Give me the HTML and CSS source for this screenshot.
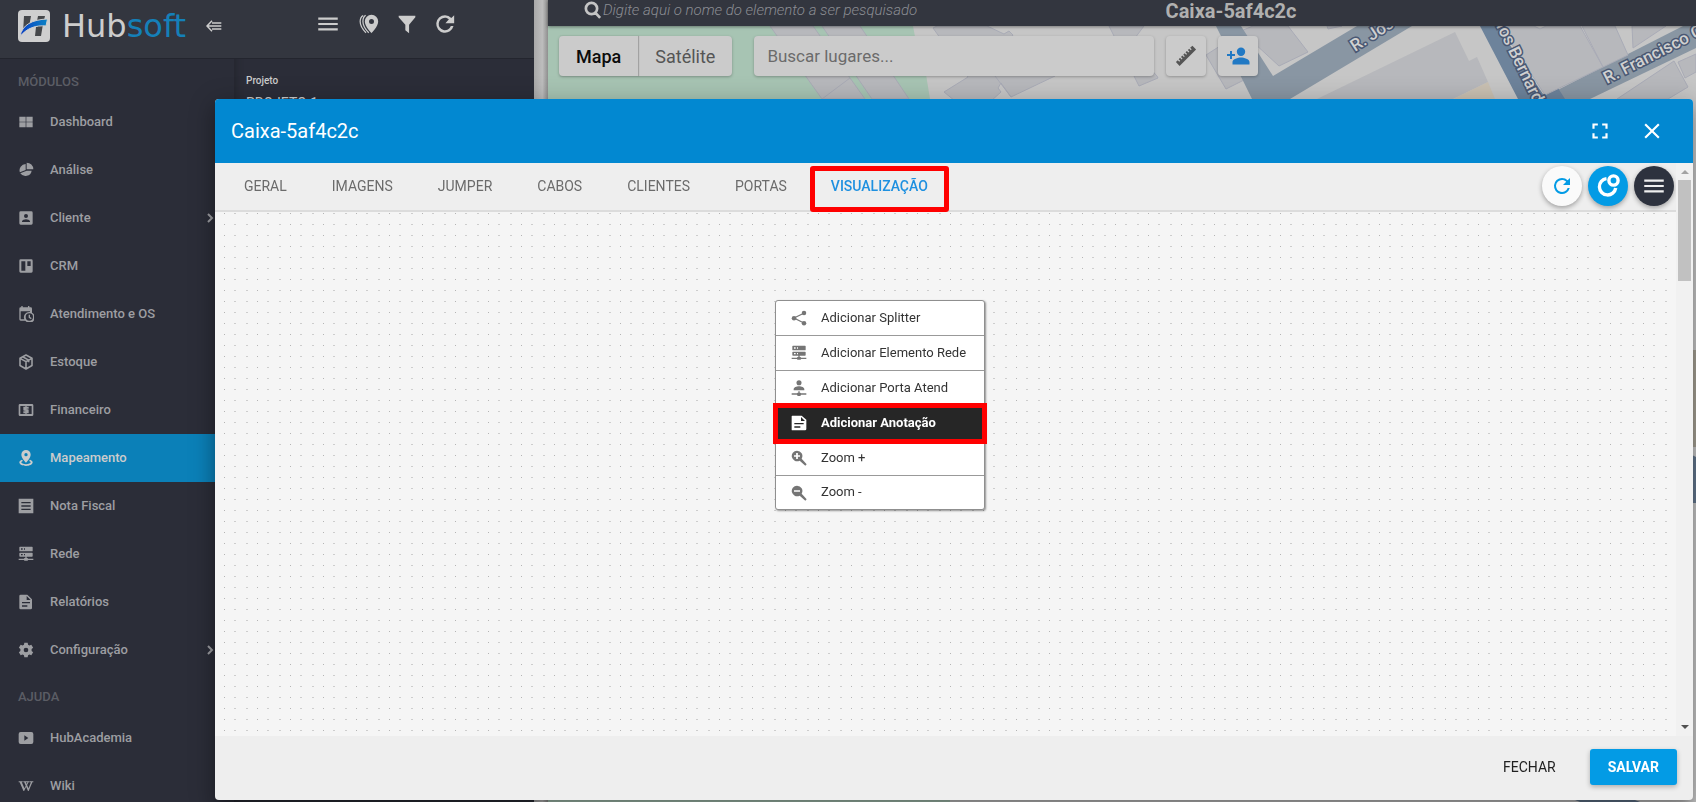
FILE: index.html
```html
<!DOCTYPE html>
<html lang="pt-BR">
<head>
<meta charset="utf-8">
<title>Hubsoft - Mapeamento</title>
<link rel="stylesheet" href="styles.css">
</head>
<body>
<svg class="sprite" aria-hidden="true">
  <symbol id="i-menu" viewBox="0 0 24 24"><path d="M3 6h18v2H3zM3 11h18v2H3zM3 16h18v2H3z"/></symbol>
  <symbol id="i-refresh" viewBox="0 0 24 24"><path d="M17.65 6.35A7.96 7.96 0 0 0 12 4a8 8 0 1 0 7.73 10h-2.08A6 6 0 1 1 12 6c1.66 0 3.14.69 4.22 1.78L13 11h7V4z"/></symbol>
  <symbol id="i-refresh-bold" viewBox="0 0 24 24"><path d="M12 1.500a10.500 10.500 0 1 0 10.200 13h-3.200A7.500 7.500 0 1 1 12 4.500c1.800 0 3.400.7 4.700 1.900L12.500 11H23V1.500l-3.400 3.200A10.500 10.500 0 0 0 12 1.500z"/></symbol>
  <symbol id="i-grid" viewBox="0 0 24 24"><path d="M2 4h9.500v7.500H2zM12.500 4H22v7.500h-9.500zM2 12.500h9.500V20H2zM12.500 12.500H22V20h-9.500z"/></symbol>
  <symbol id="i-pie" viewBox="0 0 24 24"><path d="M11.500 3A9.500 9.500 0 0 0 2.800 15.500L11.500 12zM13 1v10h10A10 10 0 0 0 13 1zM3.400 17A9.500 9.500 0 0 0 20.500 13H13z"/></symbol>
  <symbol id="i-account" viewBox="0 0 24 24"><path fill-rule="evenodd" d="M4 2h16a2 2 0 0 1 2 2v16a2 2 0 0 1-2 2H4a2 2 0 0 1-2-2V4a2 2 0 0 1 2-2zM12 6a3 3 0 1 0 0 6 3 3 0 0 0 0-6zM6 18h12v-1c0-2-4-3.100-6-3.100S6 15 6 17z"/></symbol>
  <symbol id="i-board" viewBox="0 0 24 24"><path fill-rule="evenodd" d="M4 2h16a2 2 0 0 1 2 2v16a2 2 0 0 1-2 2H4a2 2 0 0 1-2-2V4a2 2 0 0 1 2-2zM5 5v14h6V5zM14 5v7h5V5z"/></symbol>
  <symbol id="i-calendar" viewBox="0 0 24 24"><path fill-rule="evenodd" d="M5 0h2v2h8V0h2v2h2a2 2 0 0 1 2 2v6a8 8 0 1 1-10 12H4a2 2 0 0 1-2-2V4a2 2 0 0 1 2-2h1zM4 8v12h5.500A8 8 0 0 1 18 9V8zM17 11a5.500 5.500 0 1 0 0 11 5.500 5.500 0 0 0 0-11zM16 13h2v3.500l2.500 1.500-1 1.700-3.500-2.200z"/></symbol>
  <symbol id="i-box" viewBox="0 0 24 24"><path fill="none" stroke="currentColor" stroke-width="2.400" stroke-linejoin="round" d="M12 1.500l9 4.800v11L12 22.500 3 17.300v-11zM3 6.500l9 5 9-5M12 11.500V22M7 4.200l9 5v3"/></symbol>
  <symbol id="i-cash" viewBox="0 0 24 24"><path fill-rule="evenodd" d="M3 3h18a2 2 0 0 1 2 2v14a2 2 0 0 1-2 2H3a2 2 0 0 1-2-2V5a2 2 0 0 1 2-2zM3.500 6v12h17V6z"/><path d="M8 7h8v3h-5v1h4a1 1 0 0 1 1 1v4a1 1 0 0 1-1 1H8v-3h5v-1H9a1 1 0 0 1-1-1zM11 5.500h2v13h-2z"/></symbol>
  <symbol id="i-map" viewBox="0 0 24 24"><path fill-rule="evenodd" d="M12 0a7 7 0 0 1 7 7c0 5-7 12-7 12S5 12 5 7a7 7 0 0 1 7-7zM12 4.500a2.500 2.500 0 1 0 0 5 2.500 2.500 0 0 0 0-5z"/><path d="M6 14.500c-2.500 1-4 2.300-4 4C2 22 7 24 12 24s10-2 10-5.500c0-1.700-1.500-3-4-4l-1.500 2c1.500.6 2.500 1.200 2.500 2 0 1.500-3 2.700-7 2.700s-7-1.200-7-2.700c0-.8 1-1.400 2.500-2z"/></symbol>
  <symbol id="i-note" viewBox="0 0 24 24"><path fill-rule="evenodd" d="M1 1h22v22H1zM5 6v2h14V6zM5 11v2h14v-2zM5 16v2h14v-2z"/></symbol>
  <symbol id="i-server" viewBox="0 0 24 24"><path fill-rule="evenodd" d="M13 18h1a1 1 0 0 1 1 1h8v2h-8a1 1 0 0 1-1 1h-4a1 1 0 0 1-1-1H1v-2h8a1 1 0 0 1 1-1h1v-2H3a1 1 0 0 1-1-1v-4a1 1 0 0 1 1-1h18a1 1 0 0 1 1 1v4a1 1 0 0 1-1 1h-8zM3 1h18a1 1 0 0 1 1 1v5a1 1 0 0 1-1 1H3a1 1 0 0 1-1-1V2a1 1 0 0 1 1-1zM9 3.500v2h1.500v-2zM9 12v2h1.500v-2zM4.500 3.500v2h2.500v-2zM4.500 12v2h2.500v-2z"/></symbol>
  <symbol id="i-file" viewBox="0 0 24 24"><path fill-rule="evenodd" d="M4 1h10l7 7v13a2 2 0 0 1-2 2H4a2 2 0 0 1-2-2V3a2 2 0 0 1 2-2zM13 3v6h6zM6 12v2h12v-2zM6 17v2h8v-2z"/></symbol>
  <symbol id="i-annotation" viewBox="0 0 24 24"><path fill-rule="evenodd" d="M2 1h14l7 6v14a2 2 0 0 1-2 2H2a1 1 0 0 1-1-1V2a1 1 0 0 1 1-1zM15 3v6h6zM5 12v2h14v-2zM5 17v2h9v-2z"/></symbol>
  <symbol id="i-gear" viewBox="0 0 24 24"><path fill-rule="evenodd" d="M9.500 1h5l.6 3 2 1.200L20 4.100l2.700 4.400-2.300 2v3l2.300 2L20 19.900l-2.900-1.100-2 1.200-.6 3h-5l-.6-3-2-1.200L4 19.900l-2.700-4.400 2.300-2v-3l-2.300-2L4 4.100l2.900 1.100 2-1.200zM12 8.500a3.500 3.500 0 1 0 0 7 3.500 3.500 0 0 0 0-7z"/></symbol>
  <symbol id="i-play" viewBox="0 0 24 24"><path fill-rule="evenodd" d="M4 3h16a3 3 0 0 1 3 3v12a3 3 0 0 1-3 3H4a3 3 0 0 1-3-3V6a3 3 0 0 1 3-3zM9.500 8v8l6-4z"/></symbol>
  <symbol id="i-wiki" viewBox="0 0 24 24"><path d="M1 5h6v1.200H5.700l4 9.300 1.900-4L9.300 6.200H8V5h5.500v1.200h-1.600l1 2.700 1.300-2.700h-1.400V5H17v1.200h-1.200l-2.200 4.300 2.200 5 3.500-9.300h-1.800V5H23v1.200h-1.500L16 19.500h-1l-2.800-6.200-3 6.200h-1L2.500 6.200H1z"/></symbol>
  <symbol id="i-chevron" viewBox="0 0 24 24"><path fill="none" stroke="currentColor" stroke-width="4" d="M8 4l8 8-8 8"/></symbol>
  <symbol id="i-collapse" viewBox="0 0 24 24"><path fill="none" stroke="currentColor" stroke-width="2.200" d="M9 4l-7.500 8L9 20M2 12h21M9 7.500h14M9 16.500h14"/></symbol>
  <symbol id="i-pins" viewBox="0 0 24 24"><path fill-rule="evenodd" d="M15 1a8 8 0 0 1 8 8c0 6-8 14-8 14S7 15 7 9a8 8 0 0 1 8-8zM15 6a3 3 0 1 0 0 6 3 3 0 0 0 0-6z"/><path fill="none" stroke="currentColor" stroke-width="1.500" d="M8 1.500C5.500 3 4.700 6 4.700 9c0 5 4.500 11 7 13.500M5 1.800C2.200 3.400 1.400 6 1.400 9c0 5 4 10.500 7 13.500"/></symbol>
  <symbol id="i-filter" viewBox="0 0 24 24"><path d="M2 2h20v2l-7.500 9v10L10 19.500V13L2 4z"/></symbol>
  <symbol id="i-search" viewBox="0 0 24 24"><path fill="none" stroke="currentColor" stroke-width="3.600" d="M10 2.500a7.500 7.500 0 1 0 0 15 7.500 7.500 0 0 0 0-15zM15 15.500l6.500 7"/></symbol>
  <symbol id="i-ruler" viewBox="0 0 24 24"><path d="M1 18.500l2-2 1.700 1.700 1-1L4 15.500l1.500-1.500 1.700 1.700 1-1L6.500 13 8 11.500l1.700 1.700 1-1L9 10.500 10.500 9l1.700 1.700 1-1L11.500 8 13 6.500l1.700 1.700 1-1L14 5.500 15.500 4l1.700 1.700 1-1L16.500 3 19 .8 23 5 5 23z"/></symbol>
  <symbol id="i-person-add" viewBox="0 0 24 24"><path d="M15 12a4.200 4.200 0 1 0 0-8.400 4.200 4.200 0 0 0 0 8.400zM6 10V7H4v3H1v2h3v3h2v-3h3v-2zM15 13.500c-3 0-8.500 1.500-8.500 4.500v2.500h17V18c0-3-5.500-4.500-8.500-4.500z"/></symbol>
  <symbol id="i-full" viewBox="0 0 24 24"><path d="M5 5h5v2H7v3H5zM14 5h5v5h-2V7h-3zM5 14h2v3h3v2H5zM17 14h2v5h-5v-2h3z"/></symbol>
  <symbol id="i-close" viewBox="0 0 24 24"><path d="M19 6.400L17.600 5 12 10.600 6.400 5 5 6.400 10.600 12 5 17.600 6.400 19 12 13.400 17.600 19 19 17.600 13.400 12z"/></symbol>
  <symbol id="i-orbit" viewBox="0 0 24 24"><path fill="none" stroke="currentColor" stroke-width="3.400" d="M10.500 4.600a8.200 8.200 0 1 0 9.200 9.400"/><circle cx="17.500" cy="6.500" r="4.600" fill="none" stroke="currentColor" stroke-width="3.400"/></symbol>
  <symbol id="i-share" viewBox="0 0 24 24"><path fill="none" stroke="currentColor" stroke-width="1.800" d="M20 4.500L4.500 12 20 20"/><circle cx="19.500" cy="4.500" r="3.400"/><circle cx="4.500" cy="12.500" r="3.400"/><circle cx="19.500" cy="20" r="3.400"/></symbol>
  <symbol id="i-port" viewBox="0 0 24 24"><circle cx="12" cy="4" r="3.800"/><path d="M12 9.500c-4 0-8 1.500-8 4.500v1.500h16V14c0-3-4-4.500-8-4.500zM11 17h2v2h1l1 1h8v2h-8l-1 2h-4l-1-2H1v-2h8l1-1h1z"/></symbol>
  <symbol id="i-zoom-in" viewBox="0 0 24 24"><path fill-rule="evenodd" d="M9 1a8 8 0 0 1 7 12l7.500 8.500-2 2L13 16A8 8 0 1 1 9 1zM7.700 4.500v3.300H4.500v2.500h3.200v3.200h2.600v-3.200h3.200V7.800h-3.200V4.500z"/></symbol>
  <symbol id="i-zoom-out" viewBox="0 0 24 24"><path fill-rule="evenodd" d="M9 1a8 8 0 0 1 7 12l7.500 8.500-2 2L13 16A8 8 0 1 1 9 1zM4.500 7.800v2.500h9V7.800z"/></symbol>
</svg>

<div class="app">
  <nav class="sidebar">
    <header class="brand">
      <svg class="brand-mark" viewBox="0 0 32 32" aria-hidden="true">
        <defs><linearGradient id="swoosh"><stop offset="0" stop-color="#0a3fc4"/><stop offset="1" stop-color="#0b83c4"/></linearGradient></defs>
        <rect width="32" height="32" rx="4" fill="#cfcfcf"/>
        <path fill="#45474a" d="M6 6h7l-2 11-6 6zM20 6h7l-1 4-7 1zM18 17l7-3-2 12h-6z"/>
        <path fill="url(#swoosh)" stroke="#cfcfcf" d="M2 26.500C4 15 14 9.500 29.500 9L28 16C18 15 9 18 2 26.500z"/>
      </svg>
      <span class="brand-name">Hub<span class="brand-accent">soft</span></span>
      <button class="icon-button" aria-label="Recolher menu"><svg class="icon icon-16"><use href="#i-collapse"/></svg></button>
    </header>
    <h2 class="group">MÓDULOS</h2>
    <a class="item" href="#"><svg class="icon icon-16"><use href="#i-grid"/></svg><span>Dashboard</span></a>
    <a class="item" href="#"><svg class="icon icon-16"><use href="#i-pie"/></svg><span>Análise</span></a>
    <a class="item" href="#"><svg class="icon icon-16"><use href="#i-account"/></svg><span>Cliente</span><svg class="icon chevron"><use href="#i-chevron"/></svg></a>
    <a class="item" href="#"><svg class="icon icon-16"><use href="#i-board"/></svg><span>CRM</span></a>
    <a class="item" href="#"><svg class="icon icon-16"><use href="#i-calendar"/></svg><span>Atendimento e OS</span></a>
    <a class="item" href="#"><svg class="icon icon-16"><use href="#i-box"/></svg><span>Estoque</span></a>
    <a class="item" href="#"><svg class="icon icon-16"><use href="#i-cash"/></svg><span>Financeiro</span></a>
    <a class="item active" href="#"><svg class="icon icon-16"><use href="#i-map"/></svg><span>Mapeamento</span></a>
    <a class="item" href="#"><svg class="icon icon-16"><use href="#i-note"/></svg><span>Nota Fiscal</span></a>
    <a class="item" href="#"><svg class="icon icon-16"><use href="#i-server"/></svg><span>Rede</span></a>
    <a class="item" href="#"><svg class="icon icon-16"><use href="#i-file"/></svg><span>Relatórios</span></a>
    <a class="item" href="#"><svg class="icon icon-16"><use href="#i-gear"/></svg><span>Configuração</span><svg class="icon chevron"><use href="#i-chevron"/></svg></a>
    <h2 class="group">AJUDA</h2>
    <a class="item" href="#"><svg class="icon icon-16"><use href="#i-play"/></svg><span>HubAcademia</span></a>
    <a class="item" href="#"><svg class="icon icon-16"><use href="#i-wiki"/></svg><span>Wiki</span></a>
  </nav>

  <section class="projects">
    <div class="project-tools">
      <button class="icon-button" aria-label="Menu"><svg class="icon icon-26"><use href="#i-menu"/></svg></button>
      <button class="icon-button" aria-label="Marcadores"><svg class="icon icon-20"><use href="#i-pins"/></svg></button>
      <button class="icon-button" aria-label="Filtrar"><svg class="icon icon-20"><use href="#i-filter"/></svg></button>
      <button class="icon-button" aria-label="Atualizar"><svg class="icon icon-20"><use href="#i-refresh-bold"/></svg></button>
    </div>
    <div class="project">
      <span class="project-label">Projeto</span>
      <span class="project-name">PROJETO 1</span>
    </div>
  </section>

  <div class="divider"></div>

  <section class="map-pane">
    <header class="map-bar">
      <label class="element-search"><svg class="icon icon-18"><use href="#i-search"/></svg><input type="text" aria-label="Pesquisar elemento" placeholder="Digite aqui o nome do elemento a ser pesquisado"></label>
      <h1 class="map-title">Caixa-5af4c2c</h1>
    </header>
    <div class="map">
      <svg class="map-art" viewBox="548 26 1148 776" preserveAspectRatio="xMinYMin slice" aria-hidden="true">
        <rect x="548" y="26" width="1148" height="776" fill="#c6c6c6"/>
        <path fill="#a7c4b3" d="M548 26h365l3 16 8 20 6 37 20 703H548z"/>
        <g fill="#b7b8bc" stroke="#a9abb6">
          <path d="M770 26h43l52 73h-43zM822 26h38l49 73h-37zM822 99l28-21"/>
          <path d="M933 28l4-2 50 0 17 8 5-3 4 4-3 4 45 37-44 21-10-14-3 5 3 4-10 9h-36l-11-9 24-15zM995 76l16 21"/>
          <path d="M1109 26h35l-15 20 28 30 1 2-19 8zM1206 55l14-9 26 33-20 10zM1241 31l12-5h35l20 26-29 14zM1327 26h15l-14 3z"/>
        </g>
        <path fill="#8996a3" d="M1216 26h25l32 50 84-50h55L1290 99h-38z"/>
        <path fill="#b7b8bc" d="M1317 99l138-67 14 29 8-4 11 25-35 17z"/>
        <path fill="#c9c0b2" d="M1453 99l35-17 7 17z"/>
        <path fill="#8996a3" d="M1540 99l88-45 55-28h13v22L1590 99z"/>
        <path fill="#6d839b" d="M1480 26h17l46 68 15-6 7 11h-47z"/>
        <g fill="#b7b8bc" stroke="#a9abb6">
          <path d="M1500 26h34l6 3 6-3h34l23 41-58 28zM1582 26l21 41 25-12-13-29zM1632 26h34l-33 22zM1617 99l57-38 14 26-20 12zM1685 78l11-6v-18l-18 8z"/>
        </g>
        <path fill="#a5a093" d="M1676 350h20v97h-20z"/><path fill="#62768d" d="M1676 447l20 10v46h-20z"/>
        <path fill="#62768d" d="M1570 798h60l10 4h-60z"/>
        <g class="street">
          <text transform="translate(1355 52) rotate(-33)">R. José</text>
          <text transform="translate(1496 26) rotate(64)">los Bernardo</text>
          <text transform="translate(1607 84) rotate(-27)">R. Francisco C</text>
        </g>
      </svg>
      <div class="map-controls">
        <div class="map-types">
          <button class="map-type selected">Mapa</button>
          <button class="map-type">Satélite</button>
        </div>
        <input class="places" type="text" aria-label="Buscar lugares" placeholder="Buscar lugares...">
        <button class="map-button" aria-label="Medir"><svg class="icon icon-22"><use href="#i-ruler"/></svg></button>
        <button class="map-button blue" aria-label="Adicionar pessoa"><svg class="icon icon-24"><use href="#i-person-add"/></svg></button>
      </div>
    </div>
  </section>
</div>

<div class="dialog" role="dialog" aria-labelledby="dialog-title">
  <header class="dialog-head">
    <h2 class="dialog-title" id="dialog-title">Caixa-5af4c2c</h2>
    <button class="icon-button" aria-label="Tela cheia"><svg class="icon icon-26"><use href="#i-full"/></svg></button>
    <button class="icon-button" aria-label="Fechar janela"><svg class="icon icon-26"><use href="#i-close"/></svg></button>
  </header>
  <div class="dialog-body">
    <div class="content">
      <div class="tabs">
        <button class="tab">GERAL</button>
        <button class="tab">IMAGENS</button>
        <button class="tab">JUMPER</button>
        <button class="tab">CABOS</button>
        <button class="tab">CLIENTES</button>
        <button class="tab">PORTAS</button>
        <button class="tab current">VISUALIZAÇÃO</button>
        <div class="actions">
          <button class="round light" aria-label="Recarregar"><svg class="icon icon-24"><use href="#i-refresh"/></svg></button>
          <button class="round blue-fill" aria-label="Órbita"><svg class="icon icon-24"><use href="#i-orbit"/></svg></button>
          <button class="round dark" aria-label="Opções"><svg class="icon icon-26"><use href="#i-menu"/></svg></button>
        </div>
      </div>
      <div class="canvas">
        <svg class="dots" aria-hidden="true">
          <defs>
            <pattern id="dot-grid" width="33" height="33" patternUnits="userSpaceOnUse">
              <g fill="#b4b4b4"><path d="M9 1h1v1h-1zM9 12h1v1h-1zM9 23h1v1h-1z"/></g>
              <g fill="#cdcdcd"><path d="M19 1h2v1h-2zM31 1h2v1h-2zM19 12h2v1h-2zM31 12h2v1h-2zM19 23h2v1h-2zM31 23h2v1h-2z"/></g>
            </pattern>
          </defs>
          <rect width="100%" height="100%" fill="url(#dot-grid)"/>
        </svg>
        <div class="context-menu">
          <button class="option"><svg class="icon icon-16"><use href="#i-share"/></svg><span>Adicionar Splitter</span></button>
          <button class="option"><svg class="icon icon-16"><use href="#i-server"/></svg><span>Adicionar Elemento Rede</span></button>
          <button class="option"><svg class="icon icon-16"><use href="#i-port"/></svg><span>Adicionar Porta Atend</span></button>
          <button class="option chosen"><svg class="icon icon-16"><use href="#i-annotation"/></svg><span>Adicionar Anotação</span></button>
          <button class="option"><svg class="icon icon-16"><use href="#i-zoom-in"/></svg><span>Zoom +</span></button>
          <button class="option"><svg class="icon icon-16"><use href="#i-zoom-out"/></svg><span>Zoom -</span></button>
        </div>
      </div>
    </div>
    <div class="scrollbar" aria-hidden="true">
      <svg class="arrow" viewBox="0 0 8 4"><path fill="#a3a3a3" d="M4 0l4 4H0z"/></svg>
      <div class="thumb"></div>
      <svg class="arrow" viewBox="0 0 8 4"><path fill="#505050" d="M0 0h8L4 4z"/></svg>
    </div>
  </div>
  <footer class="dialog-foot">
    <button class="flat">FECHAR</button>
    <button class="raised">SALVAR</button>
  </footer>
</div>
</body>
</html>
```
FILE: styles.css
```css
* { box-sizing: border-box; }

html, body { height: 100%; }

body {
  margin: 0;
  overflow: hidden;
  background: #2b2d38;
  font-family: Roboto, "Liberation Sans", sans-serif;
  font-size: 14px;
}

button, input { font: inherit; color: inherit; border: 0; margin: 0; }
button { padding: 0; background: none; cursor: pointer; }
h1, h2 { margin: 0; font-weight: 500; }
a { color: inherit; text-decoration: none; }

.sprite { position: absolute; width: 0; height: 0; }
.icon { display: block; flex: none; fill: currentColor; }
.icon-16 { width: 16px; height: 16px; }
.icon-18 { width: 18px; height: 18px; }
.icon-20 { width: 20px; height: 20px; }
.icon-22 { width: 22px; height: 22px; }
.icon-24 { width: 24px; height: 24px; }
.icon-26 { width: 26px; height: 26px; }
.icon-button { display: flex; align-items: center; justify-content: center; }

.app { display: flex; height: 100vh; overflow: hidden; }

/* Sidebar */
.sidebar { flex: none; width: 234px; overflow: hidden; color: #9d9ea2; }

.brand {
  display: flex;
  align-items: center;
  gap: 8px;
  height: 59px;
  padding: 0 12px 7px 18px;
  background: #33363f;
  border-bottom: 1px solid #23252e;
  color: #cdcdcd;
}
.brand-mark { flex: none; width: 32px; height: 32px; }
.brand-name {
  flex: 1;
  padding-left: 4px;
  font-family: "DejaVu Sans", sans-serif;
  font-weight: 400;
  font-size: 32px;
  line-height: 40px;
}
.brand-accent { color: #1580b8; }

.group {
  height: 39px;
  padding: 7px 18px 0;
  color: #5b5d65;
  font-size: 13px;
  line-height: 32px;
}
.group ~ .group { height: 40px; }

.item {
  display: flex;
  align-items: center;
  gap: 16px;
  height: 48px;
  padding: 0 18px;
  font-size: 13px;
  font-weight: 500;
}
.item span, .option span { padding-bottom: 2px; }
.item.active { background: #0b80b8; color: #cccccc; }
.chevron { width: 12px; height: 12px; margin-left: auto; }

/* Project column */
.projects {
  flex: none;
  width: 300px;
  box-shadow: inset 6px 0 6px -4px #24262e;
  color: #cccccc;
}
.project-tools {
  display: flex;
  align-items: center;
  justify-content: center;
  gap: 18px;
  height: 59px;
  padding: 0 0 10px 2px;
  background: #33363f;
  border-bottom: 1px solid #23252e;
}
.project { display: grid; gap: 8px; padding: 16px 12px; }
.project-label { font-size: 10px; line-height: 12px; font-weight: 500; }
.project-name { font-size: 14px; line-height: 16px; }

.divider { flex: none; width: 14px; background: linear-gradient(90deg, #a9a9a9, #bdbdbd 60%, #8f8f8f); }

/* Map */
.map-pane { flex: 1; display: flex; flex-direction: column; min-width: 0; }
.map-bar {
  display: grid;
  grid-template-columns: 8fr auto 5fr;
  align-items: start;
  flex: none;
  height: 26px;
  padding: 0 36px;
  overflow: hidden;
  background: #33363f;
  box-shadow: 0 1px 3px #0006;
  z-index: 1;
}
.element-search { display: flex; align-items: center; height: 20px; gap: 1px; color: #c4c4c4; }
.element-search input {
  flex: 1;
  padding: 0;
  outline: 0;
  background: none;
  font-size: 15px;
  font-style: italic;
  font-weight: 300;
}
.element-search input::placeholder { color: #8b8d93; }
.map-title { font-size: 20px; line-height: 22px; font-weight: 700; color: #b0b0b0; }

.map { position: relative; flex: 1; overflow: hidden; }
.map-art { position: absolute; inset: 0; width: 100%; height: 100%; }
.street text {
  fill: #d0d0d0;
  stroke: #4a5873;
  stroke-width: 3px;
  paint-order: stroke;
  font-size: 17px;
  font-weight: 500;
}
.map-controls { position: relative; display: flex; gap: 12px; padding: 10px 11px; }
.map-types, .places, .map-button {
  height: 40px;
  border-radius: 4px;
  background: #cbcbcb;
  box-shadow: 0 1px 3px #0004;
}
.map-types { display: flex; margin-right: 10px; }
.map-type { padding: 0 17px; font-size: 18px; color: #555555; }
.map-type.selected { color: #0c0c0c; font-weight: 500; box-shadow: 1px 0 1px #0003; }
.places { width: 400px; padding: 0 13px; font-size: 17px; color: #333333; }
.places::placeholder { color: #6b6b6b; }
.map-button { display: flex; align-items: center; justify-content: center; width: 40px; color: #555555; }
.map-button.blue { color: #2179c4; }

/* Dialog */
.dialog {
  position: fixed;
  inset: 99px 3px 2px 215px;
  display: flex;
  flex-direction: column;
  overflow: hidden;
  border-radius: 4px;
  background: #eeeeee;
  box-shadow: 0 7px 8px -4px #0003, 0 13px 19px 2px #0002, 0 5px 24px 4px #0003;
}
.dialog-head {
  display: flex;
  align-items: center;
  gap: 26px;
  flex: none;
  height: 64px;
  padding: 0 28px 0 16px;
  background: #0288d1;
  color: #ffffff;
}
.dialog-title { flex: 1; font-size: 20px; font-weight: 400; }
.dialog-body { display: flex; flex: 1; min-height: 0; }
.content { flex: 1; display: flex; flex-direction: column; min-width: 0; }

.tabs {
  display: flex;
  align-items: flex-start;
  gap: 1px;
  flex: none;
  height: 49px;
  padding: 0 2px 0 7px;
  box-shadow: inset 0 -2px #dcdcdc;
}
.tab { height: 46px; padding: 0 22px; color: #6b6b6b; }
.tab.current {
  margin-top: 3px;
  padding: 0 16px 6px;
  border: 5px solid #ff0000;
  border-radius: 3px;
  color: #1e90e0;
  font-weight: 500;
}
.actions { display: flex; gap: 6px; margin: 3px 0 0 auto; }
.round {
  display: flex;
  align-items: center;
  justify-content: center;
  width: 40px;
  height: 40px;
  border-radius: 50%;
  box-shadow: 0 2px 5px #0005;
}
.light { background: #fafafa; color: #039be5; }
.blue-fill { background: #039be5; color: #ffffff; }
.dark { background: #2d323e; color: #eeeeee; }

.canvas { position: relative; flex: 1; background: #f5f5f5; }
.dots { display: block; width: 100%; height: 100%; }
.context-menu {
  position: absolute;
  top: 88px;
  left: 560px;
  width: 210px;
  border: 1px solid #8f8f8f;
  border-radius: 3px;
  background: #ffffff;
  box-shadow: 1px 1px 2px #0006;
}
.option {
  display: flex;
  align-items: center;
  gap: 14px;
  width: 100%;
  height: 35px;
  padding: 0 15px;
  border-bottom: 1px solid #999999;
  color: #333333;
  font-size: 13px;
}
.option:last-child { height: 33px; border-bottom: 0; }
.option .icon { color: #757575; }
.option.chosen {
  background: #262626;
  color: #ffffff;
  font-weight: 700;
  outline: 5px solid #ff0000;
  outline-offset: -2px;
}
.option.chosen .icon { color: #ffffff; }

.scrollbar {
  display: flex;
  flex-direction: column;
  align-items: center;
  flex: none;
  width: 17px;
  padding: 7px 2px;
  background: #f1f1f1;
}
.arrow { width: 8px; height: 4px; }
.thumb { width: 13px; height: 101px; margin: 6px 0 auto; background: #c1c1c1; }

.dialog-foot {
  display: flex;
  align-items: center;
  justify-content: flex-end;
  gap: 16px;
  flex: none;
  height: 64px;
  padding: 0 16px 2px;
}
.flat, .raised { height: 36px; padding: 0 18px; border-radius: 3px; }
.flat { color: #212121; }
.raised { background: #039be5; color: #ffffff; font-weight: 700; box-shadow: 0 2px 5px #0004; }
```
